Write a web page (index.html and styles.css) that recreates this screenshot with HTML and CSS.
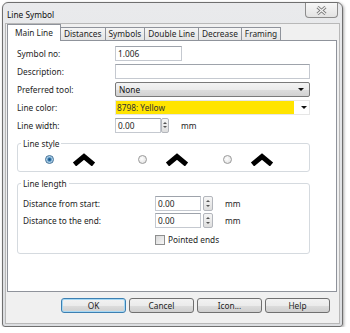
FILE: index.html
```html
<!DOCTYPE html>
<html lang="en">

<head>
  <meta charset="UTF-8">
  <meta name="viewport" content="width=device-width, initial-scale=1.0">
  <title>Line Symbol</title>
  <link rel="stylesheet" href="styles.css">
</head>

<body>
  <div class="window">
    <div class="titlebar">
      <span class="title">Line Symbol</span>
      <div class="close">
        <svg width="11" height="9" viewBox="0 0 11 9">
          <path d="M1.5 1 L9.5 8 M9.5 1 L1.5 8" stroke="#7a7a7a" stroke-width="3" fill="none"/>
          <path d="M1.5 1 L9.5 8 M9.5 1 L1.5 8" stroke="#f4f4f4" stroke-width="1.2" fill="none"/>
        </svg>
      </div>
    </div>

    <div class="client">
      <div class="tabs">
        <div class="tab active">Main Line</div>
        <div class="tab">Distances</div>
        <div class="tab">Symbols</div>
        <div class="tab">Double Line</div>
        <div class="tab">Decrease</div>
        <div class="tab">Framing</div>
      </div>

      <div class="panel">
        <div class="row">
          <label>Symbol no:</label>
          <div class="input short">1.006</div>
        </div>
        <div class="row">
          <label>Description:</label>
          <div class="input wide"></div>
        </div>
        <div class="row">
          <label>Preferred tool:</label>
          <div class="combo">None<span class="arrow"></span></div>
        </div>
        <div class="row">
          <label>Line color:</label>
          <div class="colorcombo">
            <div class="swatch">8798: Yellow</div>
            <span class="arrow"></span>
          </div>
        </div>
        <div class="row">
          <label>Line width:</label>
          <div class="input num">0.00</div>
          <div class="spinbtn"><span class="up"></span><span class="down"></span></div>
          <span class="unit">mm</span>
        </div>

        <div class="group style-group">
          <div class="legend">Line style</div>
          <div class="styles">
            <div class="opt">
              <span class="radio checked"></span>
              <svg class="chevron" width="24" height="13" viewBox="0 0 24 13">
                <polyline points="2.5,11.5 12,3.5 21.5,11.5" stroke="#000" stroke-width="5" fill="none"/>
              </svg>
            </div>
            <div class="opt">
              <span class="radio"></span>
              <svg class="chevron" width="24" height="13" viewBox="0 0 24 13">
                <polyline points="2.5,11.5 12,3.5 21.5,11.5" stroke="#000" stroke-width="5" fill="none"/>
              </svg>
            </div>
            <div class="opt">
              <span class="radio"></span>
              <svg class="chevron" width="24" height="13" viewBox="0 0 24 13">
                <polyline points="2.5,11.5 12,3.5 21.5,11.5" stroke="#000" stroke-width="5" fill="none"/>
              </svg>
            </div>
          </div>
        </div>

        <div class="group length-group">
          <div class="legend">Line length</div>
          <div class="lrow">
            <label>Distance from start:</label>
            <div class="input num">0.00</div>
            <div class="spinbtn sep"><span class="up"></span><span class="down"></span></div>
            <span class="unit">mm</span>
          </div>
          <div class="lrow">
            <label>Distance to the end:</label>
            <div class="input num">0.00</div>
            <div class="spinbtn sep"><span class="up"></span><span class="down"></span></div>
            <span class="unit">mm</span>
          </div>
          <div class="lrow check-row">
            <span class="checkbox"></span>
            <span>Pointed ends</span>
          </div>
        </div>
      </div>

      <div class="buttons">
        <button class="default">OK</button>
        <button>Cancel</button>
        <button>Icon...</button>
        <button>Help</button>
      </div>
    </div>
  </div>
</body>

</html>
```

FILE: styles.css
```css
* {
  box-sizing: border-box;
}

body {
  margin: 0;
  padding: 0;
  background: white;
  font-family: "Noto Sans", "Open Sans", sans-serif;
  font-size: 8.3px;
  color: #1e1e1e;
}

.window {
  margin: 2px 0 0 2px;
  width: 341px;
  height: 325px;
  padding: 0 2px 2px 2px;
  border: 1px solid #6f6f6f;
  border-radius: 6px 6px 3px 3px;
  background: linear-gradient(#e9eaec, #dcdee1);
  box-shadow: 1px 1px 3px rgba(0, 0, 0, 0.35);
}

.titlebar {
  height: 20px;
  display: flex;
  justify-content: space-between;
  align-items: flex-start;
}

.title {
  padding: 6px 0 0 2px;
  line-height: 11px;
  color: #111;
}

.close {
  width: 33px;
  height: 15px;
  margin-right: 2px;
  border: 1px solid #8c8c8c;
  border-top: none;
  border-radius: 0 0 4px 4px;
  background: linear-gradient(#f7f7f7, #e3e3e3);
  display: flex;
  justify-content: center;
  align-items: center;
}

.client {
  height: 301px;
  background: #f0f0f0;
  border: 1px solid #b8b8b8;
  display: flex;
  flex-direction: column;
}

.tabs {
  height: 16px;
  padding-left: 1px;
  display: flex;
  align-items: flex-end;
}

.tab {
  height: 13px;
  padding: 0 3px;
  line-height: 12px;
  border: 1px solid #8f939b;
  border-bottom: none;
  margin-right: -1px;
  background: linear-gradient(#f5f5f5, #e4e4e4);
  white-space: nowrap;
}

.tab.active {
  height: 17px;
  padding: 1px 7px 0 7px;
  margin-bottom: -1px;
  line-height: 14px;
  background: white;
  position: relative;
  z-index: 1;
}

.panel {
  height: 252px;
  margin: 0 2px 0 1px;
  padding: 4px 0 0 9px;
  background: white;
  border: 1px solid #8f939b;
}

.row {
  height: 16px;
  margin-bottom: 2px;
  display: flex;
  align-items: center;
}

.row label {
  width: 98px;
}

.input {
  height: 15px;
  padding: 0 2px;
  line-height: 13px;
  border: 1px solid #c5c9d0;
  border-top-color: #9ea3ab;
  background: white;
}

.input.short {
  width: 67px;
}

.input.wide {
  width: 195px;
}

.input.num {
  width: 46px;
}

.combo {
  width: 195px;
  height: 15px;
  padding: 0 3px;
  line-height: 13px;
  border: 1px solid #7a7a7a;
  border-radius: 2px;
  background: linear-gradient(#f3f3f3 0%, #ebebeb 50%, #dddddd 51%, #d2d2d2 100%);
  display: flex;
  justify-content: space-between;
  align-items: center;
  color: #111;
}

.arrow {
  width: 0;
  height: 0;
  border-left: 3px solid transparent;
  border-right: 3px solid transparent;
  border-top: 3px solid #111;
  margin-right: 2px;
}

.colorcombo {
  width: 195px;
  height: 15px;
  border: 1px solid #e6e6e6;
  display: flex;
  align-items: center;
}

.swatch {
  width: 180px;
  height: 13px;
  padding-left: 1px;
  line-height: 13px;
  background: #ffe400;
  color: #333;
}

.colorcombo .arrow {
  margin-left: 7px;
}

.spinbtn {
  width: 8px;
  height: 15px;
  border: 1px solid #b3b6bc;
  border-radius: 2px;
  background: linear-gradient(#f6f6f6, #dedede);
  display: flex;
  flex-direction: column;
  justify-content: space-around;
  align-items: center;
  padding: 2px 0;
}

.spinbtn.sep {
  width: 10px;
  margin-left: 2px;
}

.spinbtn .up {
  width: 0;
  height: 0;
  border-left: 2px solid transparent;
  border-right: 2px solid transparent;
  border-bottom: 2px solid #555;
}

.spinbtn .down {
  width: 0;
  height: 0;
  border-left: 2px solid transparent;
  border-right: 2px solid transparent;
  border-top: 2px solid #555;
}

.unit {
  margin-left: 12px;
}

.group {
  width: 293px;
  border: 1px solid #d5dadf;
  border-radius: 3px;
}

.legend {
  width: max-content;
  margin: -6px 0 0 3px;
  padding: 0 2px;
  line-height: 11px;
  background: white;
}

.style-group {
  height: 29px;
  margin-top: 10px;
}

.styles {
  padding: 4px 0 0 27px;
  display: grid;
  grid-template-columns: 93px 85px auto;
}

.opt {
  display: flex;
  align-items: center;
  gap: 18px;
}

.radio {
  width: 9px;
  height: 9px;
  border-radius: 50%;
  border: 1px solid #9a9a9a;
  background: radial-gradient(circle at 40% 40%, #ffffff, #dcdcdc);
}

.radio.checked {
  border-color: #3f6f96;
  background: radial-gradient(circle, #1f4f7a 0, #2a6ea3 25%, #a8cde8 55%, #e4f0f8 100%);
}

.length-group {
  height: 71px;
  margin-top: 11px;
}

.length-group .legend {
  margin-bottom: 7px;
}

.lrow {
  height: 15px;
  margin-bottom: 2px;
  padding-left: 5px;
  display: flex;
  align-items: center;
}

.lrow label {
  width: 132px;
}

.check-row {
  margin-top: 4px;
  padding-left: 137px;
  gap: 3px;
}

.checkbox {
  width: 10px;
  height: 10px;
  border: 1px solid #8e8f8f;
  background: linear-gradient(135deg, #d8d8d8, #f7f7f7);
}

.buttons {
  padding: 6px 9px 0 0;
  display: flex;
  justify-content: flex-end;
  gap: 3px;
}

button {
  width: 65px;
  height: 15px;
  padding: 0;
  font-family: "Noto Sans", "Open Sans", sans-serif;
  font-size: 8.3px;
  color: #1e1e1e;
  border: 1px solid #707070;
  border-radius: 3px;
  background: linear-gradient(#f2f2f2 0%, #ebebeb 50%, #dddddd 51%, #cfcfcf 100%);
}

button.default {
  border-color: #3c7fb1;
  box-shadow: inset 0 0 0 1px #a6d8f4;
}
```
